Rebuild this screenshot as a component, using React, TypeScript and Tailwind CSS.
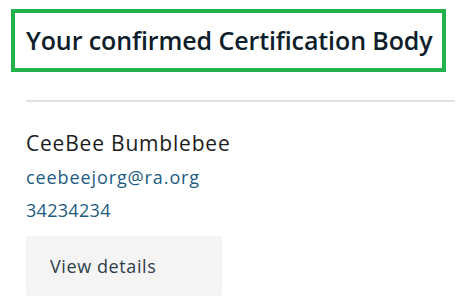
const App = () => {
  return (
    <div
      className="w-[460px] h-[307px] bg-white overflow-hidden"
      style={{ fontFamily: '"Open Sans", "Noto Sans", sans-serif' }}
    >
      {/* Title box */}
      <div className="ml-[11px] mt-[9px] w-[435px] h-[63px] border-[4px] border-[#22b14c] flex items-center pl-[11px]">
        <h1 className="text-[25px] font-semibold text-[#0e1e2b] tracking-[-0.1px] whitespace-nowrap">
          Your confirmed Certification Body
        </h1>
      </div>

      <div className="ml-[26px] mt-[28px] w-[429px] h-[2px] bg-[#dfe2e5]" />

      {/* Certification body */}
      <div className="pl-[26px] pt-[28px]">
        <p className="text-[21px] leading-[26px] tracking-[0.8px] text-[#1b1b1b] whitespace-nowrap">
          CeeBee Bumblebee
        </p>
        <p className="mt-[10px] text-[18px] leading-[22px] tracking-[0.9px] text-[#1d5c80]">
          ceebeejorg@ra.org
        </p>
        <p className="mt-[11px] text-[18px] leading-[22px] tracking-[0.3px] text-[#1d5c80]">
          34234234
        </p>
        <button className="mt-[15px] w-[196px] h-[60px] bg-[#f4f4f4] rounded-[3px] text-left pl-[24px] text-[18px] tracking-[0.6px] text-[#2e3e4a]">
          View details
        </button>
      </div>
    </div>
  );
};

export default App;
